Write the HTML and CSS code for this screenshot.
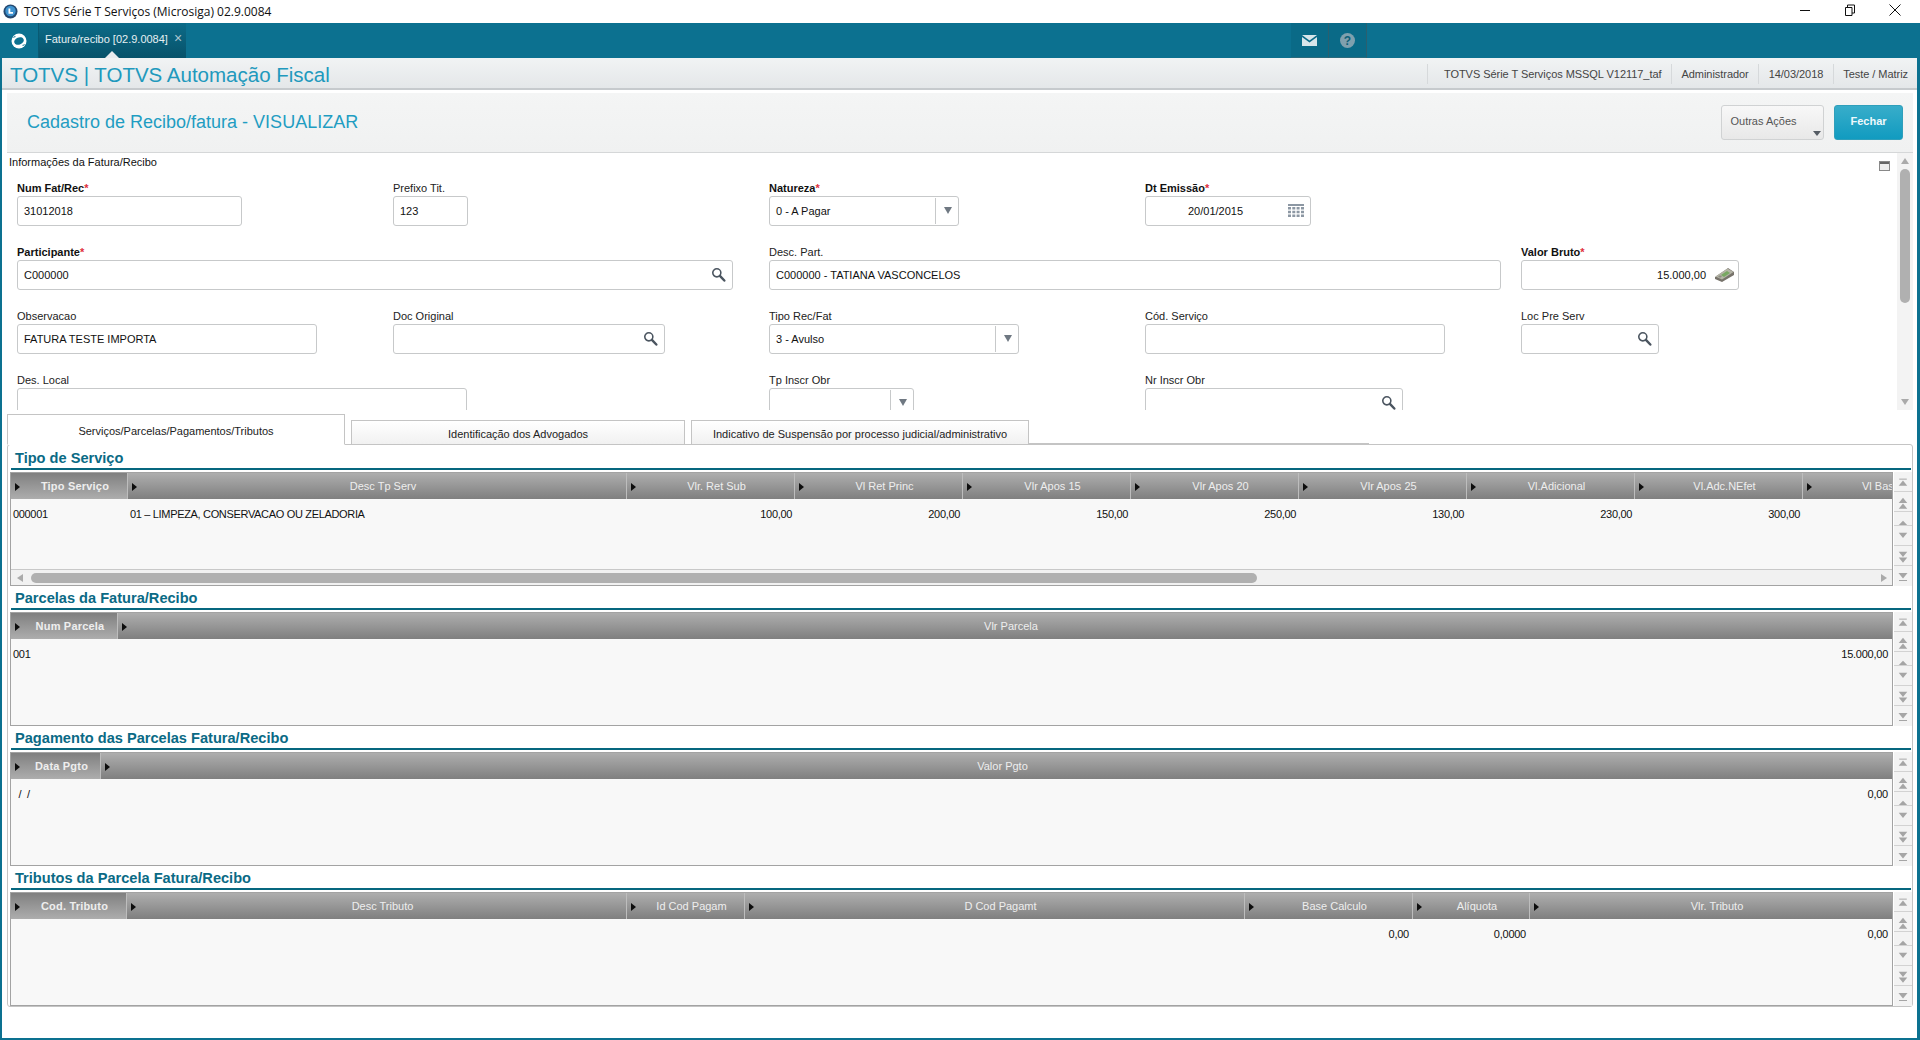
FILE: index.html
```html
<!DOCTYPE html>
<html lang="pt">
<head>
<meta charset="utf-8">
<title>TOTVS</title>
<link rel="stylesheet" href="styles.css">
</head>
<body>
<svg class="sprite" width="0" height="0">
  <symbol id="search" viewBox="0 0 16 16"><circle cx="6.2" cy="6.2" r="4.3" fill="none" stroke="#4b5560" stroke-width="1.7"/><path d="M9.5 9.5L14.2 14.4" stroke="#4b5560" stroke-width="2.6" stroke-linecap="round"/></symbol>
  <symbol id="top" viewBox="0 0 18 20"><path d="M5 7.500h8" stroke="#a5a5a5"/><path d="M9 9l4.500 5.500h-9z" fill="#a5a5a5"/></symbol>
  <symbol id="dup" viewBox="0 0 18 20"><path d="M9 6l4.500 5.500h-9zM9 12l4.500 5.500h-9z" fill="#a5a5a5"/></symbol>
  <symbol id="up" viewBox="0 0 18 14"><path d="M9 9.500l4.500 4.500h-9z" fill="#a5a5a5"/></symbol>
  <symbol id="down" viewBox="0 0 18 20"><path d="M4.500 7h9L9 12.500z" fill="#a5a5a5"/></symbol>
  <symbol id="ddn" viewBox="0 0 18 20"><path d="M4.500 6h9L9 11.500zM4.500 12h9L9 17.500z" fill="#a5a5a5"/></symbol>
  <symbol id="bot" viewBox="0 0 18 20"><path d="M4.500 7h9L9 12.500z" fill="#a5a5a5"/><path d="M5 14.500h8" stroke="#a5a5a5"/></symbol>
</svg>

<header class="titlebar">
  <svg class="app-icon" width="15" height="15" viewBox="0 0 15 15"><circle cx="7.500" cy="7.500" r="7" fill="#24486f"/><circle cx="7.500" cy="7" r="5.200" fill="#3f93d0"/><path d="M5.500 4.500h1.800v3.600h2.700v1.700H5.500z" fill="#fff"/></svg>
  <span class="titlebar-text">TOTVS Série T Serviços (Microsiga) 02.9.0084</span>
  <div class="win-controls">
    <svg width="12" height="12" viewBox="0 0 12 12"><path d="M1 6.500h10" stroke="#111"/></svg>
    <svg width="12" height="12" viewBox="0 0 12 12"><path d="M1.500 3.500h6.500v8h-6.500zM3.500 3.500v-2.500h7v8h-2.500" fill="none" stroke="#111"/></svg>
    <svg width="12" height="12" viewBox="0 0 12 12"><path d="M.5 .5l11 11M11.500 .5l-11 11" stroke="#111"/></svg>
  </div>
</header>

<nav class="navbar">
  <div class="nav-logo">
    <svg width="16" height="16" viewBox="0 0 16 16"><circle cx="8" cy="8" r="7.500" fill="#fff"/><ellipse cx="8" cy="8" rx="5" ry="3.600" transform="rotate(-22 8 8)" fill="#0c7190"/><path d="M1 5l3-2 .8 1zM15 11l-3 2-.8-1z" fill="#0c7190"/></svg>
  </div>
  <div class="nav-tab">
    <span>Fatura/recibo [02.9.0084]</span>
    <span class="nav-close">×</span>
    <i class="nav-notch"></i>
  </div>
  <div class="nav-spacer"></div>
  <div class="nav-btn">
    <svg width="15" height="11" viewBox="0 0 15 11"><path d="M0 0h15L7.500 5.500z" fill="#d8e5ea"/><path d="M0 2l7.500 5.500L15 2v9H0z" fill="#d8e5ea"/></svg>
  </div>
  <div class="nav-btn">
    <svg width="15" height="15" viewBox="0 0 15 15"><circle cx="7.500" cy="7.500" r="7.500" fill="#7fa0ae"/><text x="7.500" y="12" class="help-mark">?</text></svg>
  </div>
</nav>

<main class="app">
  <div class="app-header">
    <h1 class="app-name">TOTVS | TOTVS Automação Fiscal</h1>
    <div class="app-info">
      <span>TOTVS Série T Serviços MSSQL V12117_taf</span>
      <span>Administrador</span>
      <span>14/03/2018</span>
      <span>Teste / Matriz</span>
    </div>
  </div>

  <div class="page-head">
    <h2 class="page-title">Cadastro de Recibo/fatura - VISUALIZAR</h2>
    <div class="page-actions">
      <button class="btn-other">Outras Ações<i class="caret"></i></button>
      <button class="btn-close">Fechar</button>
    </div>
  </div>

  <section class="form-area">
    <div class="form-body">
      <div class="form-title">Informações da Fatura/Recibo</div>
      <svg class="collapse" width="11" height="10" viewBox="0 0 11 10"><rect x=".5" y=".5" width="10" height="9" fill="#eee" stroke="#888"/><rect x="1" y="1" width="9" height="2" fill="#666"/></svg>
      <div class="form-grid">
        <div class="field w225"><label class="req">Num Fat/Rec<em>*</em></label><div class="input">31012018</div></div>
        <div class="field w75"><label>Prefixo Tit.</label><div class="input">123</div></div>
        <div class="field w190"><label class="req">Natureza<em>*</em></label><div class="input select"><span>0 - A Pagar</span><b><i></i></b></div></div>
        <div class="field w166"><label class="req">Dt Emissão<em>*</em></label><div class="input date"><span>20/01/2015</span>
          <svg class="ico-cal" width="16" height="14" viewBox="0 0 16 14"><path d="M0 0h16v2H0z" fill="#8c97a3"/><path d="M0 3h3v2.500H0zM4.300 3h3v2.500h-3zM8.600 3h3v2.500h-3zM13 3h3v2.500h-3zM0 6.800h3v2.500H0zM4.300 6.800h3v2.500h-3zM8.600 6.800h3v2.500h-3zM13 6.800h3v2.500h-3zM0 10.600h3v2.500H0zM4.300 10.600h3v2.500h-3zM8.600 10.600h3v2.500h-3zM13 10.600h3v2.500h-3z" fill="#8c97a3"/></svg></div></div>
        <div></div>

        <div class="field w716 span2"><label class="req">Participante<em>*</em></label><div class="input lookup"><span>C000000</span><svg class="ico-search" width="15" height="15"><use href="#search"/></svg></div></div>
        <div class="field w732 span2"><label>Desc. Part.</label><div class="input">C000000 - TATIANA VASCONCELOS</div></div>
        <div class="field w218"><label class="req">Valor Bruto<em>*</em></label><div class="input money"><span>15.000,00</span>
          <svg class="ico-money" width="19" height="14" viewBox="0 0 19 14"><path d="M0 9L11 1.500 13 0l6 4v3L7 14 0 11z" fill="#77736b"/><path d="M.5 8.500L12.500 .5 18.500 4 7 11.500z" fill="#b4b4a6"/><path d="M6 7l6-4 3 2-6 4z" fill="#78a862"/><path d="M3 8.500l2-1.300 2 1.300-2 1.300z" fill="#8e8e84"/></svg></div></div>

        <div class="field w300"><label>Observacao</label><div class="input">FATURA TESTE IMPORTA</div></div>
        <div class="field w272"><label>Doc Original</label><div class="input lookup"><span></span><svg class="ico-search" width="15" height="15"><use href="#search"/></svg></div></div>
        <div class="field w250"><label>Tipo Rec/Fat</label><div class="input select"><span>3 - Avulso</span><b><i></i></b></div></div>
        <div class="field w300"><label>Cód. Serviço</label><div class="input"></div></div>
        <div class="field w138"><label>Loc Pre Serv</label><div class="input lookup"><span></span><svg class="ico-search" width="15" height="15"><use href="#search"/></svg></div></div>

        <div class="field w450 span2"><label>Des. Local</label><div class="input"></div></div>
        <div class="field w145"><label>Tp Inscr Obr</label><div class="input select"><span></span><b><i></i></b></div></div>
        <div class="field w258"><label>Nr Inscr Obr</label><div class="input lookup"><span></span><svg class="ico-search" width="15" height="15"><use href="#search"/></svg></div></div>
      </div>
    </div>
    <div class="vscroll">
      <i class="tri-up"></i>
      <div class="vtrack"><div class="vthumb"></div></div>
      <i class="tri-down"></i>
    </div>
  </section>

  <div class="tabs">
    <div class="tab active">Serviços/Parcelas/Pagamentos/Tributos</div>
    <div class="tab t2">Identificação dos Advogados</div>
    <div class="tab t3">Indicativo de Suspensão por processo judicial/administrativo</div>
    <div class="tab-line"></div>
  </div>

  <div class="tab-panel">
    <section class="block">
      <h3 class="block-title">Tipo de Serviço</h3>
      <div class="grid-wrap">
        <div class="grid g1">
          <div class="ghead">
            <div class="hc first"><i></i><span>Tipo Serviço</span></div>
            <div class="hc"><i></i><span>Desc Tp Serv</span></div>
            <div class="hc"><i></i><span>Vlr. Ret Sub</span></div>
            <div class="hc"><i></i><span>Vl Ret Princ</span></div>
            <div class="hc"><i></i><span>Vlr Apos 15</span></div>
            <div class="hc"><i></i><span>Vlr Apos 20</span></div>
            <div class="hc"><i></i><span>Vlr Apos 25</span></div>
            <div class="hc"><i></i><span>Vl.Adicional</span></div>
            <div class="hc"><i></i><span>Vl.Adc.NEfet</span></div>
            <div class="hc"><i></i><span class="cut">Vl Bas</span></div>
          </div>
          <div class="gbody">
            <span>000001</span><span>01 – LIMPEZA, CONSERVACAO OU ZELADORIA</span>
            <span class="num">100,00</span><span class="num">200,00</span><span class="num">150,00</span><span class="num">250,00</span><span class="num">130,00</span><span class="num">230,00</span><span class="num">300,00</span><span></span>
          </div>
          <div class="hscroll"><i class="tri-left"></i><div class="htrack"><div class="hthumb"></div></div><i class="tri-right"></i></div>
        </div>
        <div class="side">
          <svg class="s20"><use href="#top"/></svg><svg class="s20"><use href="#dup"/></svg><svg class="s14"><use href="#up"/></svg><svg class="s20"><use href="#down"/></svg><svg class="s20"><use href="#ddn"/></svg><svg class="s20 last"><use href="#bot"/></svg>
        </div>
      </div>
    </section>

    <section class="block">
      <h3 class="block-title">Parcelas da Fatura/Recibo</h3>
      <div class="grid-wrap">
        <div class="grid g2">
          <div class="ghead">
            <div class="hc first"><i></i><span>Num Parcela</span></div>
            <div class="hc"><i></i><span>Vlr Parcela</span></div>
          </div>
          <div class="gbody"><span>001</span><span class="num">15.000,00</span></div>
        </div>
        <div class="side">
          <svg class="s20"><use href="#top"/></svg><svg class="s20"><use href="#dup"/></svg><svg class="s14"><use href="#up"/></svg><svg class="s20"><use href="#down"/></svg><svg class="s20"><use href="#ddn"/></svg><svg class="s20 last"><use href="#bot"/></svg>
        </div>
      </div>
    </section>

    <section class="block">
      <h3 class="block-title">Pagamento das Parcelas Fatura/Recibo</h3>
      <div class="grid-wrap">
        <div class="grid g3">
          <div class="ghead">
            <div class="hc first"><i></i><span>Data Pgto</span></div>
            <div class="hc"><i></i><span>Valor Pgto</span></div>
          </div>
          <div class="gbody"><span>&nbsp;&nbsp;/&nbsp;&nbsp;/</span><span class="num">0,00</span></div>
        </div>
        <div class="side">
          <svg class="s20"><use href="#top"/></svg><svg class="s20"><use href="#dup"/></svg><svg class="s14"><use href="#up"/></svg><svg class="s20"><use href="#down"/></svg><svg class="s20"><use href="#ddn"/></svg><svg class="s20 last"><use href="#bot"/></svg>
        </div>
      </div>
    </section>

    <section class="block">
      <h3 class="block-title">Tributos da Parcela Fatura/Recibo</h3>
      <div class="grid-wrap">
        <div class="grid g4">
          <div class="ghead">
            <div class="hc first"><i></i><span>Cod. Tributo</span></div>
            <div class="hc"><i></i><span>Desc Tributo</span></div>
            <div class="hc"><i></i><span>Id Cod Pagam</span></div>
            <div class="hc"><i></i><span>D Cod Pagamt</span></div>
            <div class="hc"><i></i><span>Base Calculo</span></div>
            <div class="hc"><i></i><span>Alíquota</span></div>
            <div class="hc"><i></i><span>Vlr. Tributo</span></div>
          </div>
          <div class="gbody"><span></span><span></span><span></span><span></span><span class="num">0,00</span><span class="num">0,0000</span><span class="num">0,00</span></div>
        </div>
        <div class="side">
          <svg class="s20"><use href="#top"/></svg><svg class="s20"><use href="#dup"/></svg><svg class="s14"><use href="#up"/></svg><svg class="s20"><use href="#down"/></svg><svg class="s20"><use href="#ddn"/></svg><svg class="s20 last"><use href="#bot"/></svg>
        </div>
      </div>
    </section>
  </div>
</main>
</body>
</html>
```

FILE: styles.css
```css
* { box-sizing: border-box; }
html, body { margin: 0; height: 100%; overflow: hidden; }
body {
  display: flex;
  flex-direction: column;
  width: 1920px;
  height: 1040px;
  font-family: "Liberation Sans", Arial, sans-serif;
  font-size: 11px;
  color: #111;
  background: #fff;
}
.sprite { position: absolute; }

/* window title bar */
.titlebar { height: 23px; flex: none; display: flex; align-items: center; padding-left: 3px; background: #fff; }
.app-icon { flex: none; }
.titlebar-text { margin-left: 6px; font-family: "Open Sans", sans-serif; font-size: 12px; color: #111; }
.win-controls { margin-left: auto; margin-bottom: 3px; display: flex; align-items: center; gap: 33px; padding-right: 19px; }

/* nav */
.navbar { height: 35px; flex: none; display: flex; background: #0c7190; }
.nav-logo { width: 39px; display: flex; align-items: center; justify-content: center; border-right: 1px solid #095a73; }
.nav-tab {
  position: relative;
  width: 147px;
  padding: 10px 0 0 6px;
  white-space: nowrap;
  color: #e6f0f3;
  font-size: 11px;
  background: linear-gradient(#0c6b88, #07526a);
}
.nav-close { margin-left: 3px; color: #a9c6d0; font-size: 14px; line-height: 10px; }
.nav-notch { position: absolute; left: 66px; bottom: 0; border: 7px solid transparent; border-top: 0; border-bottom-color: #e8ebee; }
.nav-spacer { width: 1105px; }
.nav-btn { width: 38px; display: flex; align-items: center; justify-content: center; background: #0a6a87; border-right: 1px solid #2a5f6f; border-bottom: 1px solid #2a6a7c; }
.help-mark { font: bold 12px "Liberation Sans", sans-serif; fill: #0c5f78; text-anchor: middle; }

/* app frame */
.app { flex: 1; min-height: 0; display: flex; flex-direction: column; border-left: 2px solid #0c7190; border-right: 3px solid #0c7190; border-bottom: 2px solid #0c7190; background: #fff; }
.app-header { height: 32px; flex: none; display: flex; align-items: center; justify-content: space-between; padding-left: 8px; background: linear-gradient(#f1f3f4, #e4e7e9); border-bottom: 2px solid #c6cacd; }
.app-name { margin: 3px 0 0; font-size: 20.500px; font-weight: 400; color: #2199bd; }
.app-info { display: flex; align-items: center; margin-top: 2px; color: #444; font-size: 11px; letter-spacing: -.05px; }
.app-info span { padding: 0 9.500px; height: 20px; line-height: 20px; border-left: 1px solid #d6d9db; }
.app-info span:first-child { padding: 0 9.500px 0 16px; }
.app-info span:last-child { padding-right: 9px; }

.page-head { flex: none; height: 60px; margin: 3px 4px 0 5px; display: flex; align-items: center; justify-content: space-between; padding: 0 10px 0 20px; background: linear-gradient(#f4f5f5, #f0f1f1); border-bottom: 1px solid #d5d7d8; }
.page-title { margin: 0; font-size: 18px; font-weight: 400; color: #1f9dc2; }
.page-actions { display: flex; gap: 10px; margin-top: -1px; }
.page-actions button { height: 35px; font-family: inherit; font-size: 11px; border-radius: 3px; position: relative; }
.btn-other { width: 103px; padding: 0 18px 2px 0; color: #555; background: linear-gradient(#f8f8f8, #e8e8e8); border: 1px solid #d0d2d3; }
.caret { position: absolute; right: 2px; bottom: 3px; border: 4px solid transparent; border-bottom: 0; border-top: 5px solid #555c64; }
.btn-close { width: 69px; padding: 0 0 2px; color: #eef9fc; font-weight: 700; background: linear-gradient(#38adca, #119bc0); border: 1px solid #2f9fbb; }

/* form */
.form-area { flex: none; height: 257px; margin: 0 4px 0 5px; display: flex; overflow: hidden; background: #fff; }
.form-body { flex: 1; position: relative; }
.form-title { height: 18px; line-height: 18px; padding-left: 2px; color: #111; }
.collapse { position: absolute; right: 7px; top: 8px; }
.form-grid { display: grid; grid-template-columns: repeat(5, 376px); row-gap: 18px; padding: 9px 0 0 10px; }
.field label { display: block; height: 16px; line-height: 16px; color: #222; }
.field label.req { font-weight: 700; color: #111; }
.field em { color: #e03040; font-style: normal; }
.span2 { grid-column: span 2; }
.input { height: 30px; display: flex; align-items: center; padding: 0 6px 1px; background: #fff; border: 1px solid #c7c9ca; border-radius: 3px; color: #111; }
.w75 { width: 75px; } .w138 { width: 138px; } .w145 { width: 145px; } .w166 { width: 166px; }
.w190 { width: 190px; } .w218 { width: 218px; } .w225 { width: 225px; } .w250 { width: 250px; }
.w258 { width: 258px; } .w272 { width: 272px; } .w300 { width: 300px; } .w450 { width: 450px; }
.w716 { width: 716px; } .w732 { width: 732px; }
.select { padding-right: 0; justify-content: space-between; }
.select b { width: 23px; height: 26px; padding-left: 2px; display: flex; align-items: center; justify-content: center; border-left: 1px solid #c7c9ca; }
.select b i { border: 4px solid transparent; border-bottom: 0; border-top: 7px solid #6f7882; }
.lookup, .date, .money { justify-content: space-between; padding-right: 6px; }
.date span { margin-left: 36px; }
.money span { margin-left: auto; margin-right: 9px; }
.money { padding-right: 4px; }
.vscroll { width: 16px; display: flex; flex-direction: column; align-items: center; background: #f3f3f3; }
.vtrack { flex: 1; width: 10px; margin: 3px 0; }
.vthumb { height: 134px; margin-top: 2px; border-radius: 5px; background: #b0b0b0; }
.tri-up { margin-top: 5px; border: 4px solid transparent; border-top: 0; border-bottom: 6px solid #aaa; }
.tri-down { margin-bottom: 5px; border: 4px solid transparent; border-bottom: 0; border-top: 6px solid #aaa; }

/* tabs */
.tabs { flex: none; height: 35px; margin-left: 5px; display: flex; align-items: flex-end; position: relative; z-index: 1; margin-bottom: -1px; }
.tab { display: flex; align-items: center; justify-content: center; padding-top: 2px; border: 1px solid #c4c4c4; color: #222; font-size: 11px; }
.tab.active { width: 338px; height: 31px; background: #fff; border-bottom-color: #fff; }
.tab.t2 { width: 334px; height: 25px; margin-left: 6px; background: linear-gradient(#fff, #f1f1f1); }
.tab.t3 { width: 338px; height: 25px; margin-left: 6px; background: linear-gradient(#fff, #f1f1f1); }
.tab-line { width: 340px; height: 3px; border-bottom: 1px solid #c4c4c4; margin-bottom: 1px; }

.tab-panel { flex: none; height: 563px; margin: 0 4px 0 5px; padding-top: 1px; border: 1px solid #c4c4c4; border-radius: 3px; background: #fff; }
.block-title { height: 24px; margin: 0 0 2px 3px; padding-left: 4px; width: 1900px; line-height: 24px; font-size: 14.600px; font-weight: 700; color: #0a6a85; border-bottom: 2px solid #06677f; }
.grid-wrap { margin-left: 2px; display: flex; height: 114px; }
.grid { width: 1883px; display: flex; flex-direction: column; overflow: hidden; background: #f8f8f8; border: 1px solid #a3a3a3; }
.ghead, .gbody { display: grid; flex: none; }
.g1 .ghead, .g1 .gbody { grid-template-columns: 117px 499px repeat(7, 168px) 1fr; }
.g2 .ghead, .g2 .gbody { grid-template-columns: 107px 1fr; }
.g3 .ghead, .g3 .gbody { grid-template-columns: 90px 1fr; }
.g4 .ghead, .g4 .gbody { grid-template-columns: 116px 500px 118px 500px 168px 117px 1fr; }
.ghead { height: 26px; background: linear-gradient(#aeaeae, #7f7f7f); }
.hc { display: flex; align-items: center; padding-left: 4px; min-width: 0; white-space: nowrap; font-size: 11px; color: #eee; border-right: 1px solid #bdbdbd; }
.hc:last-child { border-right: 0; }
.hc i { flex: none; margin-top: 2px; border: 4px solid transparent; border-right: 0; border-left: 5px solid #0d0d0d; }
.hc span { flex: 1; text-align: center; padding-left: 3px; }
.hc span.cut { padding-left: 50px; text-align: left; }
.hc.first { font-weight: 700; letter-spacing: .2px; background: linear-gradient(#808080, #adadad); }
.gbody { flex: 1; align-content: start; padding-top: 7px; font-size: 11px; letter-spacing: -.25px; color: #111; }
.g1 .gbody { letter-spacing: -.33px; }
.gbody span { padding-left: 2px; height: 16px; line-height: 16px; white-space: nowrap; }
.gbody .num { text-align: right; padding-right: 3px; }
.g2 .num, .g3 .num, .g4 .num { padding-right: 4px; }
.hscroll { flex: none; height: 16px; display: flex; align-items: center; background: #f1f1f1; border-top: 1px solid #c9c9c9; }
.htrack { flex: 1; padding: 0 6px 0 8px; }
.hthumb { width: 1226px; height: 10px; border-radius: 5px; background: #b0b0b0; }
.tri-left { margin-left: 6px; border: 4px solid transparent; border-left: 0; border-right: 6px solid #aaa; }
.tri-right { margin-right: 5px; border: 4px solid transparent; border-right: 0; border-left: 6px solid #aaa; }
.side { width: 18px; margin-left: 1px; display: flex; flex-direction: column; background: #f3f3f3; }
.side svg { display: block; width: 18px; flex: none; border-bottom: 1px solid #d2d2d2; }
.side .s20 { height: 20px; }
.side .s14 { height: 14px; }
.side .last { border-bottom: 0; }
```
